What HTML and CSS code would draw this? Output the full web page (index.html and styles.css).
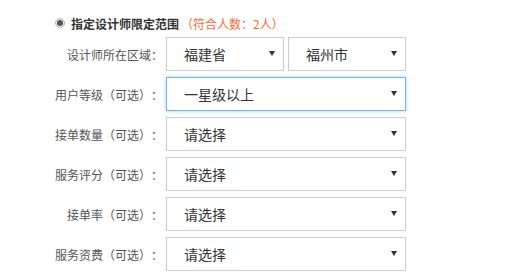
FILE: index.html
```html
<!DOCTYPE html>
<html lang="zh-CN">
  <head>
    <meta charset="UTF-8" />
    <meta name="viewport" content="width=device-width, initial-scale=1.0" />
    <title>设计师限定范围</title>
    <link rel="stylesheet" href="styles.css">
  </head>
  <body>
    <div id="container">
      <div class="header">
        <span class="radio"><span class="radio-dot"></span></span>
        <span class="title">指定设计师限定范围</span>
        <span class="count">（符合人数：2人）</span>
      </div>

      <div class="row">
        <label class="label">设计师所在区域：</label>
        <div class="pair">
          <div class="select-wrap">
            <select class="select"><option>福建省</option></select>
            <svg class="arrow" width="6" height="5" viewBox="0 0 6 5"><path d="M0 0H6L3 5Z" fill="#333"/></svg>
          </div>
          <div class="select-wrap">
            <select class="select"><option>福州市</option></select>
            <svg class="arrow" width="6" height="5" viewBox="0 0 6 5"><path d="M0 0H6L3 5Z" fill="#333"/></svg>
          </div>
        </div>
      </div>

      <div class="row">
        <label class="label">用户等级（可选）：</label>
        <div class="select-wrap">
          <select class="select focused"><option>一星级以上</option></select>
          <svg class="arrow" width="6" height="5" viewBox="0 0 6 5"><path d="M0 0H6L3 5Z" fill="#333"/></svg>
        </div>
      </div>

      <div class="row">
        <label class="label">接单数量（可选）：</label>
        <div class="select-wrap">
          <select class="select"><option>请选择</option></select>
          <svg class="arrow" width="6" height="5" viewBox="0 0 6 5"><path d="M0 0H6L3 5Z" fill="#333"/></svg>
        </div>
      </div>

      <div class="row">
        <label class="label">服务评分（可选）：</label>
        <div class="select-wrap">
          <select class="select"><option>请选择</option></select>
          <svg class="arrow" width="6" height="5" viewBox="0 0 6 5"><path d="M0 0H6L3 5Z" fill="#333"/></svg>
        </div>
      </div>

      <div class="row">
        <label class="label">接单率（可选）：</label>
        <div class="select-wrap">
          <select class="select"><option>请选择</option></select>
          <svg class="arrow" width="6" height="5" viewBox="0 0 6 5"><path d="M0 0H6L3 5Z" fill="#333"/></svg>
        </div>
      </div>

      <div class="row">
        <label class="label">服务资费（可选）：</label>
        <div class="select-wrap">
          <select class="select"><option>请选择</option></select>
          <svg class="arrow" width="6" height="5" viewBox="0 0 6 5"><path d="M0 0H6L3 5Z" fill="#333"/></svg>
        </div>
      </div>
    </div>
  </body>
</html>
```

FILE: styles.css
```css
body {
  margin: 0;
  background: #fff;
  font-family: "Noto Sans CJK SC", "Noto Sans", sans-serif;
  color: #333;
  text-spacing-trim: space-all;
}

#container {
  padding-top: 13px;
}

.header {
  display: flex;
  align-items: center;
  height: 20px;
  padding-left: 55px;
  margin-bottom: 4px;
  font-size: 12px;
}

.radio {
  display: flex;
  align-items: center;
  justify-content: center;
  width: 8px;
  height: 8px;
  border: 1px solid #b5b5b5;
  border-radius: 50%;
  background: #eee;
  margin-right: 6px;
}

.radio-dot {
  width: 6px;
  height: 6px;
  border-radius: 50%;
  background: #555;
}

.title {
  font-weight: bold;
  color: #333;
}

.count {
  color: #ff6a34;
  margin-left: 2px;
}

.row {
  display: grid;
  grid-template-columns: 163px 240px;
  column-gap: 3px;
  align-items: center;
  height: 34px;
  margin-bottom: 6px;
}

.label {
  text-align: right;
  font-size: 12px;
  color: #555;
}

.pair {
  display: grid;
  grid-template-columns: 118px 118px;
  column-gap: 4px;
}

.select-wrap {
  position: relative;
  height: 34px;
}

.select {
  appearance: none;
  -webkit-appearance: none;
  width: 100%;
  height: 34px;
  margin: 0;
  padding: 0 20px 0 17px;
  border: 1px solid #ccc;
  border-radius: 0;
  background: #fff;
  font-family: "Noto Sans CJK SC", "Noto Sans", sans-serif;
  font-size: 14px;
  color: #333;
  outline: none;
}

.select.focused {
  border-color: #74b4ec;
  box-shadow: 0 0 4px rgba(102, 175, 233, 0.55);
}

.arrow {
  position: absolute;
  right: 9px;
  top: 14px;
  pointer-events: none;
}
```
